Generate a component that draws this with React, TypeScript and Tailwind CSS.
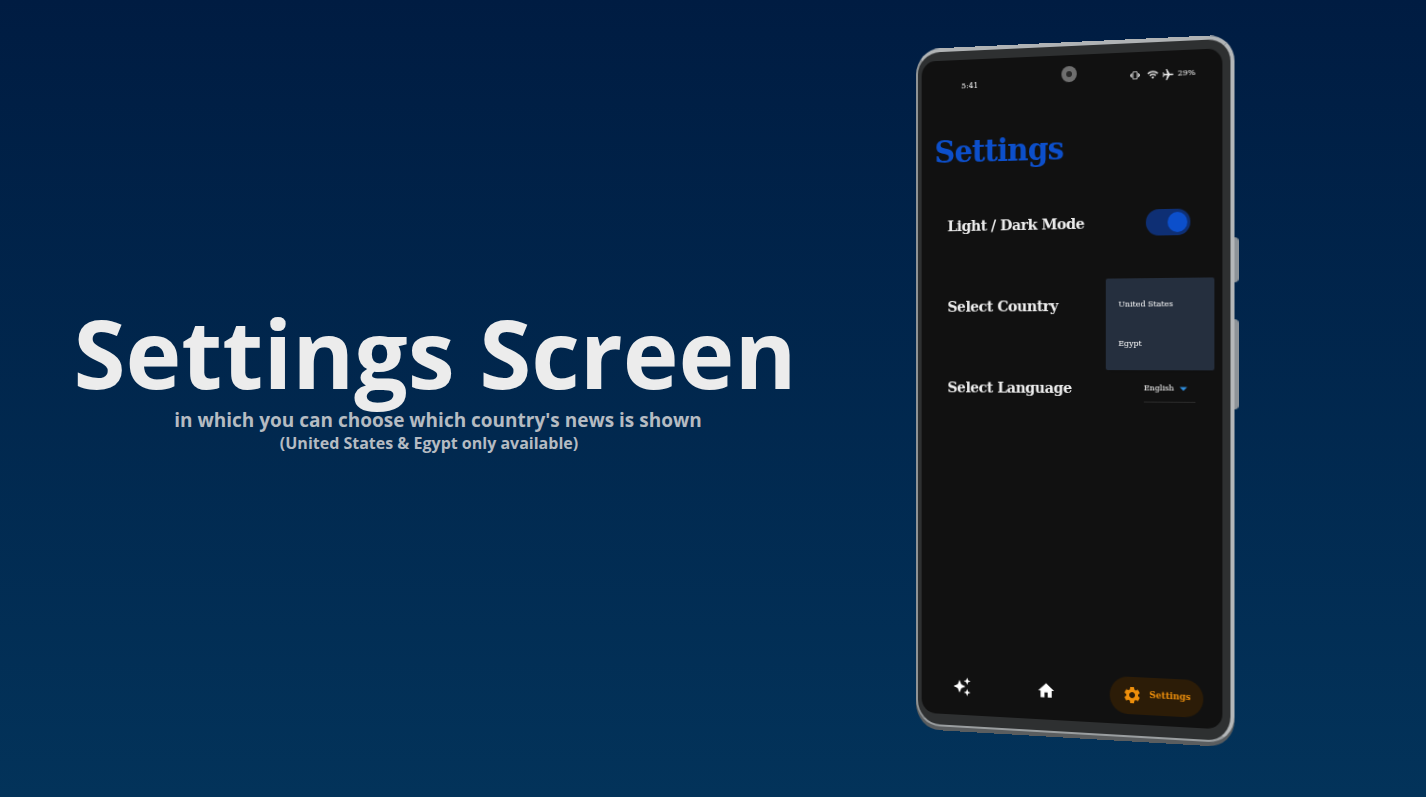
import { MdAirplanemodeActive, MdArrowDropDown, MdHome, MdSettings, MdVibration, MdWifi } from "react-icons/md";

const slab = "font-['DejaVu_Serif',serif]";

function SparkleIcon() {
  return (
    <svg width="20" height="20" viewBox="0 0 20 20" fill="currentColor">
      <path d="M7 3.5 L8.9 8.1 L13.5 10 L8.9 11.9 L7 16.5 L5.1 11.9 L0.5 10 L5.1 8.1 Z" />
      <path d="M15.2 0.8 L16.2 3.5 L18.9 4.5 L16.2 5.5 L15.2 8.2 L14.2 5.5 L11.5 4.5 L14.2 3.5 Z" />
      <path d="M15.2 12.3 L16.2 15 L18.9 16 L16.2 17 L15.2 19.7 L14.2 17 L11.5 16 L14.2 15 Z" />
    </svg>
  );
}

function SettingRow({ label, children }: { label: string; children?: React.ReactNode }) {
  return (
    <div className="flex h-[82px] items-center justify-between pl-[28px] pr-[33px]">
      <span className={`${slab} text-[15px] font-bold tracking-[-0.5px] text-[#ededed]`}>{label}</span>
      {children}
    </div>
  );
}

function Phone() {
  return (
    <div className="relative h-[692px] w-[331px] shrink-0 [transform:perspective(1900px)_rotateY(-16deg)_skewY(0.3deg)]">
      {/* side buttons */}
      <div className="absolute left-full top-[198px] h-[44px] w-[4px] rounded-r-sm bg-[#8d9398]" />
      <div className="absolute left-full top-[278px] h-[88px] w-[4px] rounded-r-sm bg-[#8d9398]" />

      <div className="flex h-full flex-col rounded-[26px] border-b-[2px] border-l-[2px] border-r-[4px] border-t-[4px] border-b-[#9a9ea0] border-l-[#8f9395] border-r-[#b4b7b9] border-t-[#b0b3b5] bg-[#2e3031] pb-[11px] pl-[4px] pr-[8px] pt-[9px] shadow-[0_4px_0_#5a5d5f]">
        <div className="relative flex flex-1 flex-col rounded-[15px] bg-[#111111]">
          {/* camera */}
          <div className="absolute left-1/2 top-[11px] flex h-[16px] w-[16px] -translate-x-1/2 items-center justify-center rounded-full bg-[#6f6f6f]">
            <div className="h-[6px] w-[6px] rounded-full bg-[#2a2a2a]" />
          </div>

          <div className="flex h-[50px] items-center justify-between pl-[43px] pr-[27px] pt-[4px] text-[#e5e5e5]">
            <span className={`${slab} text-[8px] text-white`}>5:41</span>
            <div className="mb-[8px] flex items-center gap-[3px]">
              <MdVibration size={10} />
              <MdWifi size={12} className="ml-[4px]" />
              <MdAirplanemodeActive size={13} className="rotate-90" />
              <span className={`${slab} text-[8px] text-white`}>29%</span>
            </div>
          </div>

          <h1 className={`${slab} mt-[23px] pl-[14px] text-[31px] font-bold leading-[40px] tracking-[-0.9px] text-[#0c4fcb]`}>
            Settings
          </h1>

          <div className="mt-[15px] flex flex-col">
            <SettingRow label="Light / Dark Mode">
              <div className="mr-[-1px] flex h-[26px] w-[45px] items-center justify-end rounded-full bg-[#0e2f74] pr-[3px]">
                <div className="h-[20px] w-[20px] rounded-full bg-[#0c4fcb]" />
              </div>
            </SettingRow>
            <SettingRow label="Select Country" />
            <SettingRow label="Select Language">
              <div className="mr-[-6px] flex h-[28px] w-[52px] items-center border-b border-[#2a2a2a]">
                <span className={`${slab} text-[8px] text-white`}>English</span>
                <MdArrowDropDown size={18} className="text-[#2f8fe0]" />
              </div>
            </SettingRow>
          </div>

          {/* open country menu */}
          <div className="absolute right-[8px] top-[224px] flex h-[91px] w-[110px] flex-col justify-around rounded-[2px] bg-[#252f3e] px-[13px] py-[6px] shadow-md">
            <span className={`${slab} text-[8px] text-white`}>United States</span>
            <span className={`${slab} text-[8px] text-white`}>Egypt</span>
          </div>

          <nav className="mt-auto flex h-[58px] items-center pl-[34px] pr-[19px] text-white">
            <SparkleIcon />
            <MdHome size={20} className="ml-[69px]" />
            <div className="ml-auto flex h-[37px] w-[95px] items-center justify-center gap-[8px] rounded-full bg-[#2c1c07] text-[#ee8f0b]">
              <MdSettings size={20} />
              <span className={`${slab} text-[9px] font-bold`}>Settings</span>
            </div>
          </nav>
        </div>
      </div>
    </div>
  );
}

export default function App() {
  return (
    <div className="flex h-[797px] w-full items-center overflow-hidden bg-gradient-to-b from-[#001c42] to-[#03335a] pl-[75px] pr-[189px]">
      <div className="mt-[-44px] flex w-[720px] flex-col items-center font-['Open_Sans',sans-serif] font-bold">
        <h2 className="whitespace-nowrap text-[94.5px] leading-[104px] text-[#ececec]">Settings Screen</h2>
        <p className="ml-[6px] mt-[3px] text-[19px] leading-[25px] text-[#b5bbc2]">in which you can choose which country's news is shown</p>
        <p className="ml-[-12px] text-[16px] leading-[20px] text-[#b5bbc2]">(United States &amp; Egypt only available)</p>
      </div>
      <div className="ml-auto mt-[-22px]">
        <Phone />
      </div>
    </div>
  );
}
